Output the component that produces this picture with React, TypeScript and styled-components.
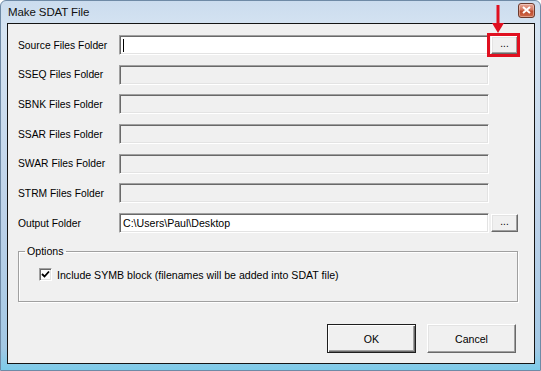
import React from "react";
import styled, { createGlobalStyle } from "styled-components";

const Global = createGlobalStyle`
  html, body { margin: 0; padding: 0; background: #ffffff; }
  body { font-family: "Liberation Sans", Arial, sans-serif; }
  * { box-sizing: border-box; }
`;

const Window = styled.div`
  position: relative;
  width: 541px;
  height: 371px;
  display: flex;
  flex-direction: column;
  padding: 0 5px 6px 6px;
  background: linear-gradient(180deg, #cbdcee 0%, #d6e4f2 8%, #bcd1e8 60%, #a3c8e4 94%, #7ccbe9 100%);
  border: 1px solid #6f8aa6;
  border-radius: 6px 6px 0 0;
`;

const TitleBar = styled.div`
  height: 22px;
  display: flex;
  align-items: center;
  justify-content: space-between;
  padding: 0 0 0 1px;
`;

const Title = styled.span`
  font-family: "Liberation Sans", Arial, sans-serif;
  font-size: 11.5px;
  color: #111;
  letter-spacing: -0.1px;
`;

const CloseButton = styled.div`
  width: 17px;
  height: 15px;
  margin-top: -4px;
  display: flex;
  align-items: center;
  justify-content: center;
  border: 1px solid #6b3a2d;
  border-radius: 3px;
  background: linear-gradient(180deg, #e9a898 0%, #d2775f 45%, #bd4a2e 55%, #cf6a4a 100%);
  box-shadow: inset 0 0 0 1px rgba(255, 255, 255, 0.35);
`;

const Client = styled.div`
  flex: 1;
  display: flex;
  flex-direction: column;
  background: #f0f0f0;
  border: 1px solid #141414;
  padding: 11px 18px 10px 10px;
`;

const Rows = styled.div`
  display: grid;
  grid-template-columns: 101px 370px 27px;
  grid-auto-rows: 20px;
  row-gap: 9.7px;
  align-items: center;
`;

const Label = styled.label`
  font-size: 10.3px;
  color: #000;
  white-space: nowrap;
`;

const Field = styled.div<{ $disabled?: boolean }>`
  height: 20px;
  display: flex;
  align-items: center;
  padding: 0 3px;
  font-size: 10.6px;
  color: #000;
  background: ${(p) => (p.$disabled ? "#f0f0f0" : "#ffffff")};
  border: 1px solid;
  border-color: #a0a0a0 #ffffff #ffffff #a0a0a0;
  box-shadow: inset 1px 1px 0 #696969, inset -1px -1px 0 #e3e3e3;
`;

const Caret = styled.span`
  width: 1px;
  height: 13px;
  background: #000;
`;

const BrowseButton = styled.div`
  margin-left: 2px;
  width: 27px;
  height: 18px;
  display: flex;
  align-items: center;
  justify-content: center;
  font-size: 10px;
  color: #000;
  background: #f0f0f0;
  border: 1px solid;
  border-color: #ffffff #696969 #696969 #ffffff;
  box-shadow: inset -1px -1px 0 #a0a0a0, inset 1px 1px 0 #e3e3e3;
  padding-bottom: 3px;
`;

const Group = styled.fieldset`
  margin: 12px 0 0 0;
  height: 57px;
  width: 500px;
  padding: 0;
  border: 1px solid #a0a0a0;
  box-shadow: inset 1px 1px 0 #ffffff, 1px 1px 0 #ffffff;
  border-radius: 0;
`;

const Legend = styled.legend`
  margin-left: 6px;
  padding: 0 2px;
  font-size: 10.6px;
  color: #000;
`;

const CheckRow = styled.div`
  display: flex;
  align-items: center;
  gap: 5px;
  margin: 11px 0 0 20px;
  font-size: 10.6px;
  color: #000;
`;

const CheckBox = styled.div`
  width: 13px;
  height: 13px;
  display: flex;
  align-items: center;
  justify-content: center;
  background: #ffffff;
  border: 1px solid;
  border-color: #a0a0a0 #ffffff #ffffff #a0a0a0;
  box-shadow: inset 1px 1px 0 #696969, inset -1px -1px 0 #e3e3e3;
`;

const Footer = styled.div`
  margin-top: auto;
  display: flex;
  justify-content: flex-end;
  gap: 11px;
`;

const DialogButton = styled.div<{ $default?: boolean }>`
  width: 89px;
  height: 29px;
  display: flex;
  align-items: center;
  justify-content: center;
  font-size: 10.6px;
  color: #000;
  background: #f0f0f0;
  border: 1px solid ${(p) => (p.$default ? "#1e1e1e" : "#ffffff")};
  border-right-color: ${(p) => (p.$default ? "#1e1e1e" : "#696969")};
  border-bottom-color: ${(p) => (p.$default ? "#1e1e1e" : "#696969")};
  box-shadow: ${(p) =>
    p.$default
      ? "inset 1px 1px 0 #ffffff, inset -1px -1px 0 #696969, inset -2px -2px 0 #a0a0a0"
      : "inset -1px -1px 0 #a0a0a0, inset 1px 1px 0 #e3e3e3"};
`;

const Highlight = styled.div`
  position: absolute;
  left: 486px;
  top: 32px;
  width: 33px;
  height: 24px;
  border: 3px solid #e01020;
`;

const Arrow = styled.svg`
  position: absolute;
  left: 491px;
  top: 4px;
`;

const folders = ["SSEQ", "SBNK", "SSAR", "SWAR", "STRM"];

export default function App() {
  return (
    <>
      <Global />
      <Window>
        <TitleBar>
          <Title>Make SDAT File</Title>
          <CloseButton>
            <svg width="9" height="8" viewBox="0 0 9 8">
              <path d="M1 1 L8 7 M8 1 L1 7" stroke="#ffffff" strokeWidth="2" />
            </svg>
          </CloseButton>
        </TitleBar>
        <Client>
          <Rows>
            <Label>Source Files Folder</Label>
            <Field>
              <Caret />
            </Field>
            <BrowseButton>...</BrowseButton>
            {folders.map((f) => (
              <React.Fragment key={f}>
                <Label>{f} Files Folder</Label>
                <Field $disabled />
                <span />
              </React.Fragment>
            ))}
            <Label>Output Folder</Label>
            <Field>C:\Users\Paul\Desktop</Field>
            <BrowseButton>...</BrowseButton>
          </Rows>
          <Group>
            <Legend>Options</Legend>
            <CheckRow>
              <CheckBox>
                <svg width="9" height="9" viewBox="0 0 9 9">
                  <path d="M1 4 L3.5 6.5 L8 1.5" stroke="#000" strokeWidth="1.8" fill="none" />
                </svg>
              </CheckBox>
              Include SYMB block (filenames will be added into SDAT file)
            </CheckRow>
          </Group>
          <Footer>
            <DialogButton $default>OK</DialogButton>
            <DialogButton>Cancel</DialogButton>
          </Footer>
        </Client>
        <Highlight />
        <Arrow width="12" height="28" viewBox="0 0 12 28">
          <path d="M6 0 L6 20" stroke="#e01020" strokeWidth="3" />
          <path d="M0 18 L12 18 L6 28 Z" fill="#e01020" />
        </Arrow>
      </Window>
    </>
  );
}
